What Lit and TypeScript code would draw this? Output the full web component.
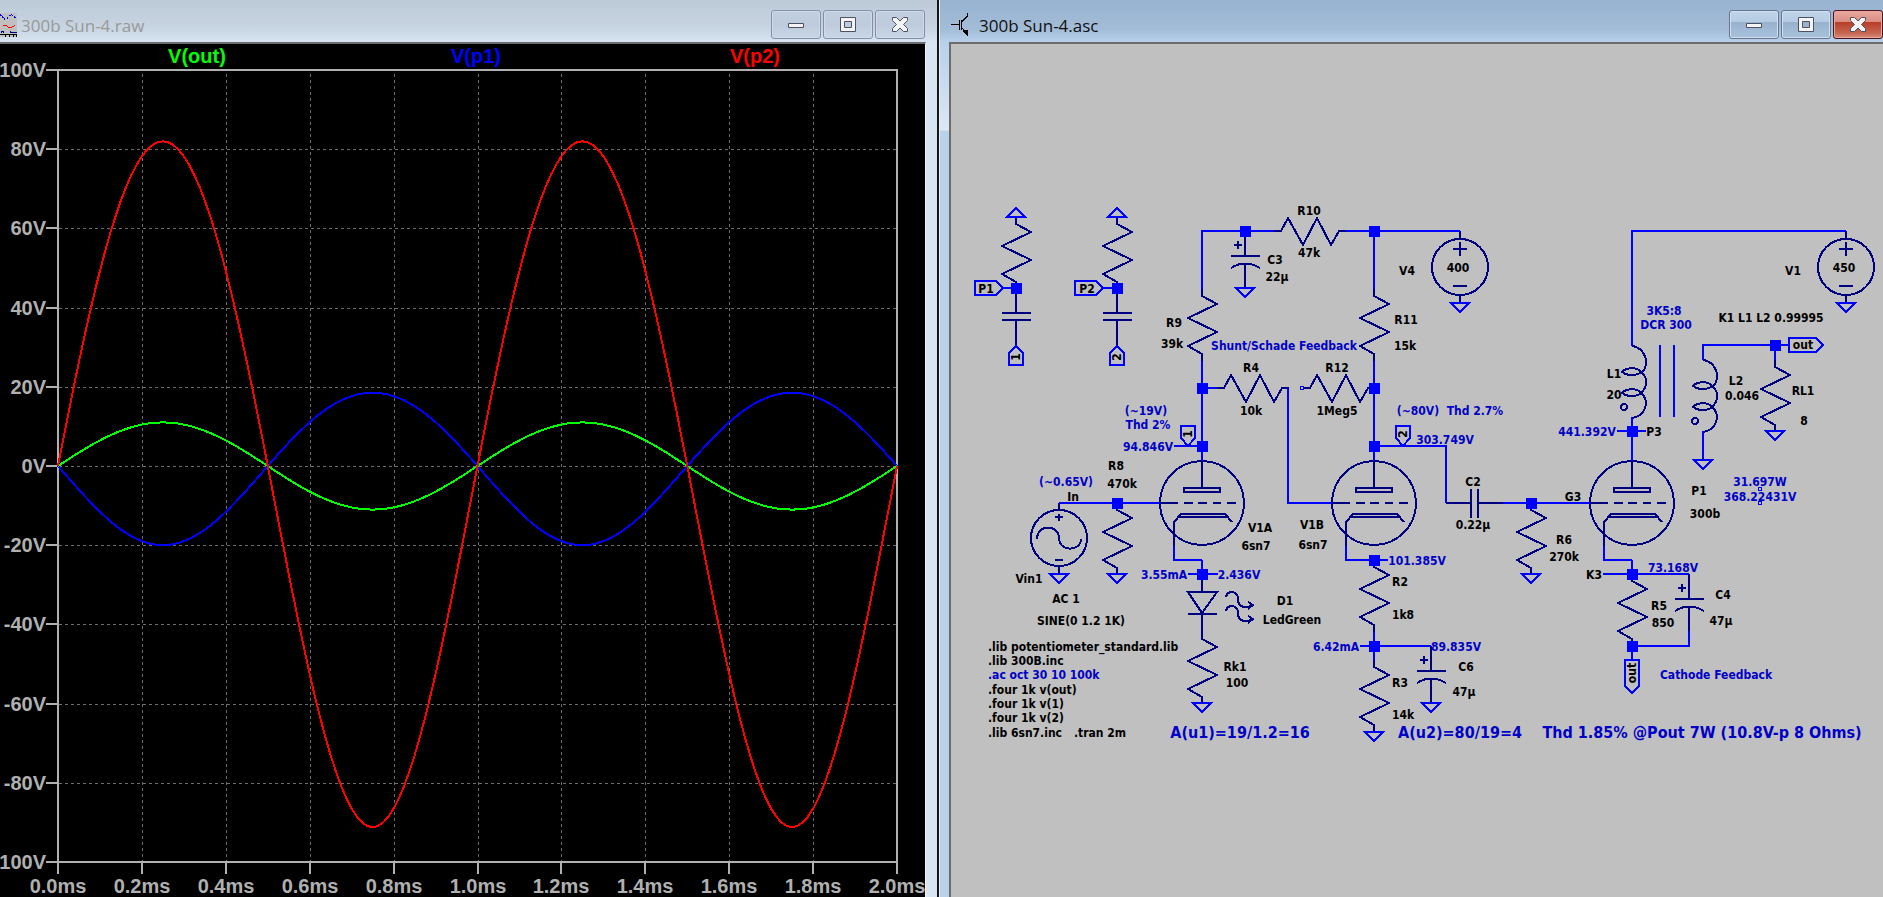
import { LitElement, html, svg, css } from 'lit';
import { customElement, property } from 'lit/decorators.js';
import { classMap } from 'lit/directives/class-map.js';

/* ---------- MDI child window: caption, buttons and sunken client area ---------- */

@customElement('child-window')
class ChildWindow extends LitElement {
  @property() caption = '';
  @property() kind = 'plot';
  @property({ type: Boolean }) active = false;

  static styles = css`
    :host { display: flex; flex-direction: column; min-width: 0; height: 100%; }
    .bar {
      display: flex; align-items: center; flex: none; box-sizing: border-box;
      height: 42px; padding: 10px 12px 3px 0; gap: 4px;
      background: linear-gradient(#bccad8, #c5d1de 50%, #c9d6e3 70%, #d8e4f2);
    }
    .bar.active {
      padding: 10px 0 3px 11px; gap: 11px;
      background: linear-gradient(#97b3d0, #a0bad6 50%, #a3bdd9 70%, #b8d0ea);
    }
    .title {
      flex: 1; min-width: 0; margin: 0; padding-top: 2px; overflow: hidden;
      font: 400 17px/24px "Open Sans", "Noto Sans", sans-serif;
      color: #999; white-space: nowrap;
    }
    .active .title { color: #101010; }
    .icon { flex: none; display: block; }
    .buttons { display: flex; gap: 2px; flex: none; }
    button {
      display: grid; place-items: center; box-sizing: border-box;
      width: 50px; height: 29px; padding: 0; border: 1px solid #8090a9; border-radius: 3px;
      background: linear-gradient(#c2cfde, #bdcbdc 50%, #c9d6e5);
      box-shadow: inset 0 0 0 1px #cfdbe8;
    }
    .active button {
      border-color: #68778e;
      background: linear-gradient(#c0d4e9, #b4cbe3 41%, #98b1cd 42%, #a9c2dc);
      box-shadow: inset 0 0 0 1px #cfe0f1;
    }
    .active button.close {
      border-color: #4a1420;
      background: linear-gradient(#e9a9a0, #da8b80 41%, #b83e28 42%, #c66450 80%, #d88a78);
      box-shadow: inset 0 0 0 1px #e6a69c;
    }
    .glyph { fill: #f4f4f4; fill-rule: evenodd; stroke: #4c5264; stroke-linejoin: round; }
    .frame {
      flex: 1; min-height: 0; display: flex; box-sizing: border-box;
      padding-right: 11px; background: #d7e4f2;
    }
    .frame.active {
      padding: 0 0 0 9px;
      background: linear-gradient(#b8d0ea, #dbe7f4 88px, #b9d1ea 89px, #b9d1ea);
    }
    .client {
      flex: 1; min-width: 0; box-sizing: border-box;
      border-top: 2px solid #6c6c6c; border-right: 1px solid #f4f4f4; background: #000;
    }
    .active .client { border-right: 0; border-left: 2px solid #6c6c6c; background: #c0c0c0; }
  `;

  private icon() {
    return this.kind === 'plot'
      ? html`<svg class="icon" width="17" height="24" viewBox="0 0 17 24" fill="none" shape-rendering="crispEdges" aria-hidden="true">
          <rect width="17" height="24" fill="#c0c0c0"/>
          <path d="M0 1.500L5 6.500M7 5.500L9 3L12 1.800L14 3L16 6" stroke="#00f" stroke-dasharray="2 1"/>
          <path d="M3 12.500H6L9 14.500L12 14L15 12.500" stroke="#f00"/>
          <path d="M1.500 20V18.500H3.500V20M10.500 18V19.500H17" stroke="#000080"/>
          <path d="M0 21.500H17M5.500 22V24M9.500 22V24M13.500 22V24M16.500 22V24" stroke="#000"/>
        </svg>`
      : html`<svg class="icon" width="17" height="24" viewBox="0 0 17 24" fill="none" stroke="#000" shape-rendering="crispEdges" aria-hidden="true">
          <path d="M0 11.500H8M8.500 7V17M10.500 7V17M11 8.500L16.500 3V0M11 15L16 20"/>
          <path d="M12 17.500L16.500 17V23L12 19Z" fill="#000" stroke="none"/>
        </svg>`;
  }

  render() {
    const c = { active: this.active };
    return html`
      <header class="bar ${classMap(c)}">
        ${this.icon()}
        <h1 class="title">${this.caption}</h1>
        <div class="buttons">
          <button aria-label="Minimize">
            <svg width="20" height="17" viewBox="0 0 20 17"><path class="glyph" d="M2.500 7.500H17.500V11.500H2.500Z"/></svg>
          </button>
          <button aria-label="Maximize">
            <svg width="20" height="17" viewBox="0 0 20 17">
              <path class="glyph" d="M2.500 1.500H17.500V15.500H2.500ZM6.500 5.500V11.500H13.500V5.500Z"/>
            </svg>
          </button>
          <button class="close" aria-label="Close">
            <svg width="20" height="17" viewBox="0 0 20 17">
              <path class="glyph" d="M2.500 1.500H6.500L10 5L13.500 1.500H17.500V4.500L13.500 8.500L17.500 12.500V15.500H13.500L10 12L6.500 15.500H2.500V12.500L6.500 8.500L2.500 4.500Z"/>
            </svg>
          </button>
        </div>
      </header>
      <div class="frame ${classMap(c)}"><div class="client"><slot></slot></div></div>
    `;
  }
}

/* ---------- Waveform plot ---------- */

const PLOT = { left: 58, right: 897, top: 70, bottom: 862 };
const px = (ms: number) => PLOT.left + ((PLOT.right - PLOT.left) * ms) / 2;
const py = (v: number) => PLOT.top + ((PLOT.bottom - PLOT.top) * (100 - v)) / 200;

interface Trace { name: string; tone: string; x: number; amp: number; second: number; }

const TRACES: Trace[] = [
  { name: 'V(p1)', tone: 'blue', x: 476, amp: -19.25, second: 0.37 },
  { name: 'V(out)', tone: 'green', x: 197, amp: 11, second: 0 },
  { name: 'V(p2)', tone: 'red', x: 755, amp: 86.6, second: 2.3 },
];

const tracePath = (t: Trace) => {
  const pts: string[] = [];
  for (let i = 0; i <= 160; i++) {
    const ms = i / 80;
    const w = 2 * Math.PI * ms;
    const v = t.amp * Math.sin(w) + t.second * (Math.cos(2 * w) - 1);
    pts.push(`${px(ms).toFixed(1)},${py(v).toFixed(1)}`);
  }
  return pts.join(' ');
};

@customElement('wave-plot')
class WavePlot extends LitElement {
  static styles = css`
    :host { display: block; width: 100%; height: 100%; }
    svg { display: block; width: 100%; height: 100%; }
    text { font: bold 20px "Liberation Sans", Arial, sans-serif; fill: #b0b0b0; text-anchor: middle; }
    .end { text-anchor: end; }
    .axis { fill: none; stroke: #b0b0b0; stroke-width: 2; shape-rendering: crispEdges; }
    .grid { stroke: #6c6c6c; stroke-width: 1; stroke-dasharray: 3 3; shape-rendering: crispEdges; }
    .green { fill: #00ff00; stroke: #00ff00; }
    .blue { fill: #0000ff; stroke: #0000ff; }
    .red { fill: #ff0000; stroke: #ff0000; }
    text { stroke: none; }
    text.green, text.blue, text.red { stroke: none; }
    .trace { fill: none; stroke-width: 2; shape-rendering: crispEdges; }
  `;

  render() {
    const steps = Array.from({ length: 11 }, (_, i) => i);
    return html`<svg viewBox="0 44 925 853" role="img" aria-label="Transient waveforms">
      ${steps.slice(1, 10).map(i => {
        const x = Math.round(px(i * 0.2)) + 0.5;
        const y = Math.round(py(100 - i * 20)) + 0.5;
        return svg`<line class="grid" x1=${x} y1="74" x2=${x} y2="861"/><line class="grid" x1="59" y1=${y} x2="896" y2=${y}/>`;
      })}
      <rect class="axis" x="58" y="70" width="839" height="792"/>
      ${steps.map(i => {
        const x = Math.round(px(i * 0.2));
        const y = Math.round(py(100 - i * 20));
        return svg`<path class="axis" d="M${x} 862V874M46 ${y}H58"/>
          <text x=${x} y="893">${(i * 0.2).toFixed(1)}ms</text>
          <text class="end" x="46" y=${y + 7}>${100 - i * 20}V</text>`;
      })}
      ${TRACES.map(t => svg`<polyline class="${t.tone} trace" points=${tracePath(t)}/>
        <text class=${t.tone} x=${t.x} y="63">${t.name}</text>`)}
    </svg>`;
  }
}

/* ---------- Schematic symbols ---------- */

type P = [number, number];
const at = ([x, y]: P) => `translate(${x} ${y})`;

const resistor = (p: P) => svg`<path class="sym" transform=${at(p)} d="M0 0V7L15 15L-14 29L15 43L-14 57L0 65V72"/>`;
const resistorH = (p: P) => svg`<path class="sym" transform=${at(p)} d="M0 0H7L14 -13L29 14L43 -13L57 14L65 0H72"/>`;
const ground = (p: P) => svg`<path class="wire" transform=${at(p)} d="M-9 0H9L0 9Z"/>`;
const node = ([x, y]: P) => svg`<rect class="node" x=${x - 5} y=${y - 5} width="11" height="11"/>`;
const pin = ([x, y]: P) => svg`<rect class="pin" x=${x - 1.5} y=${y - 1.5} width="3" height="3"/>`;
const cap = (p: P) => svg`<path class="sym" transform=${at(p)} d="M0 0V25M-14 25H15M-14 32H15M0 32V57"/>`;
const polarCap = (p: P) => svg`<path class="sym" transform=${at(p)} d="M0 0V25M-14 25H15M-14 37Q0 28 15 37M0 32V57M-11 14H-3M-7 10V18"/>`;
const coil = (p: P) => svg`<g transform=${at(p)}>
  <path class="sym" d="M0 0C9 1 14 9 14 16C14 21 12 25 9 26C5 21 -5 21 -10 26C-5 30 5 30 9 26C16 32 16 40 9 47C5 42 -5 42 -10 47C-5 51 5 51 9 47C18 55 14 70 0 72"/>
  <circle class="sym" cx="-8" cy="61" r="3"/></g>`;
const triode = (p: P) => svg`<g transform=${at(p)}>
  <circle class="sym" r="42"/>
  <path class="sym" d="M0 -42V-15M-18 -15H18V-11H-18ZM-42 0H-24M-18 0H-9M-4 0H5M11 0H19M25 0H34M-28 43V19L-21 11H23L30 19M-24 14H25"/>
  <path class="wire" d="M-28 43V57H0"/></g>`;
const source = (p: P) => svg`<g transform=${at(p)}>
  <circle class="sym" r="28"/><path class="sym" d="M0 -36V-28M0 28V36M0 -25V-11M-7 -18H7M-7 19H7"/></g>`;
const acSource = (p: P) => svg`<g transform=${at(p)}>
  <circle class="sym" r="28"/>
  <path class="sym" d="M0 -35V-28M0 28V36M0 -24V-17M-4 -21H4M-4 22H4M-22 1C-22 -14 0 -14 0 0C0 14 22 14 22 1"/></g>`;

const WIRES = [
  'M1202 289V231H1274M1346 231H1460M1374 231V289M1202 361V461M1374 361V461',
  'M1202 388H1217M1288 388V503H1332M1174 446H1202M1374 446H1446V503',
  'M1059 503H1160M1188 574H1218M1202 560V574M1374 560H1388M1374 632V660M1360 646H1431',
  'M1503 503H1590M1632 346V231H1846M1632 417V461M1617 431H1646M1660 345V417M1674 345V417',
  'M1703 360V345H1789M1775 345V360M1703 431V459M1632 560V574M1603 574H1689M1689 631V646H1632M1632 646V660',
  'M1003 288H1016M1104 288H1117',
  /* port flags */
  'M975 281H996L1003 288L996 295H975ZM1075 281H1096L1103 288L1096 295H1075Z',
  'M1016 346L1023 353V365H1009V353ZM1117 346L1124 353V365H1110V353Z',
  'M1181 426H1195V438L1188 446L1181 438ZM1396 426H1410V438L1403 446L1396 438Z',
  'M1789 338H1816L1823 345L1816 352H1789ZM1625 660H1639V686L1632 693L1625 686Z',
  'M1007 217H1025L1016 208ZM1108 217H1126L1117 208Z',
].join('');

const NODES: P[] = [
  [1016, 288], [1117, 288], [1245, 231], [1374, 231], [1202, 388], [1374, 388], [1202, 446], [1374, 446],
  [1117, 503], [1202, 574], [1374, 560], [1374, 646], [1531, 503], [1632, 431], [1775, 345], [1632, 574], [1632, 646],
];
const RES: P[] = [
  [1016, 217], [1117, 217], [1202, 289], [1374, 289], [1117, 503], [1202, 632], [1374, 560],
  [1374, 660], [1531, 503], [1775, 360], [1632, 574],
];
const RES_H: P[] = [[1274, 231], [1217, 388], [1303, 388]];
const GROUNDS: P[] = [
  [1245, 288], [1460, 303], [1846, 303], [1059, 574], [1117, 574], [1202, 703], [1374, 732],
  [1431, 703], [1531, 574], [1703, 460], [1775, 431],
];

type Label = [string, number, number];
const PARTS: Label[] = [
  ['P1', 986, 293], ['P2', 1087, 293], ['R9', 1174, 327], ['39k', 1172, 348], ['C3', 1275, 264], ['22µ', 1277, 281],
  ['R10', 1309, 215], ['47k', 1309, 257], ['V4', 1407, 275], ['400', 1458, 272], ['R11', 1406, 324], ['15k', 1405, 350],
  ['R4', 1251, 372], ['10k', 1251, 415], ['R12', 1337, 372], ['1Meg5', 1337, 415], ['V1', 1793, 275], ['450', 1844, 272],
  ['K1 L1 L2 0.99995', 1771, 322], ['out', 1803, 349], ['L1', 1614, 378], ['20', 1614, 399], ['L2', 1736, 385],
  ['0.046', 1742, 400], ['RL1', 1803, 395], ['8', 1804, 425], ['P3', 1654, 436], ['R8', 1116, 470], ['470k', 1122, 488],
  ['In', 1073, 501], ['V1A', 1260, 532], ['6sn7', 1256, 550], ['Vin1', 1029, 583], ['AC 1', 1066, 603],
  ['SINE(0 1.2 1K)', 1081, 625], ['D1', 1285, 605], ['LedGreen', 1292, 624], ['Rk1', 1235, 671], ['100', 1237, 687],
  ['V1B', 1312, 529], ['6sn7', 1313, 549], ['C2', 1473, 486], ['0.22µ', 1473, 529], ['R6', 1564, 544], ['270k', 1564, 561],
  ['R2', 1400, 586], ['1k8', 1403, 619], ['C6', 1466, 671], ['47µ', 1464, 696], ['R3', 1400, 687], ['14k', 1403, 719],
  ['G3', 1573, 501], ['P1', 1699, 495], ['300b', 1705, 518], ['K3', 1594, 579], ['R5', 1659, 610], ['850', 1663, 627],
  ['C4', 1723, 599], ['47µ', 1721, 625],
];
const COMMENTS: Label[] = [
  ['Shunt/Schade Feedback', 1284, 350], ['(~80V)\u00a0 Thd 2.7%', 1450, 415], ['303.749V', 1445, 444], ['3K5:8', 1664, 315],
  ['DCR 300', 1666, 329], ['441.392V', 1587, 436], ['(~19V)', 1146, 415], ['Thd 2%', 1148, 429], ['94.846V', 1148, 451],
  ['(~0.65V)', 1066, 486], ['3.55mA', 1164, 579], ['2.436V', 1239, 579], ['101.385V', 1417, 565], ['6.42mA', 1336, 651],
  ['89.835V', 1456, 651], ['31.697W', 1760, 486], ['368.22431V', 1760, 501], ['73.168V', 1673, 572], ['Cathode Feedback', 1716, 679],
];
const NOTES: Label[] = [
  ['A(u1)=19/1.2=16', 1240, 738], ['A(u2)=80/19=4', 1460, 738], ['Thd 1.85% @Pout 7W (10.8V-p 8 Ohms)', 1702, 738],
];
const DIRECTIVES: Label[] = [
  ['.lib potentiometer_standard.lib', 988, 651], ['.lib 300B.inc', 988, 665], ['.four 1k v(out)', 988, 694],
  ['.four 1k v(1)', 988, 708], ['.four 1k v(2)', 988, 722], ['.lib 6sn7.inc', 988, 737], ['.tran 2m', 1074, 737],
];
const UPRIGHT: Label[] = [['1', 1020, 357], ['2', 1121, 357], ['1', 1192, 434], ['2', 1407, 434], ['out', 1636, 673]];

@customElement('schematic-view')
class SchematicView extends LitElement {
  static styles = css`
    :host { display: block; width: 100%; height: 100%; }
    svg { display: block; width: 100%; height: 100%; }
    .wire, .sym { fill: none; stroke: #0000ff; stroke-width: 2; shape-rendering: crispEdges; }
    .sym { stroke: #000080; }
    .node { fill: #0000ff; shape-rendering: crispEdges; }
    .pin { fill: none; stroke: #0000ff; stroke-width: 1; shape-rendering: crispEdges; }
    text { font: bold 12px "DejaVu Sans Condensed", "DejaVu Sans", sans-serif; fill: #000; text-anchor: middle; }
    .comment, .note { fill: #0000c8; }
    .note { font-size: 16px; }
    .start { text-anchor: start; }
  `;

  render() {
    const labels = (list: Label[], cls: string) =>
      list.map(([s, x, y]) => svg`<text class=${cls} x=${x} y=${y}>${s}</text>`);
    return html`<svg viewBox="951 44 932 853" role="img" aria-label="300B amplifier schematic">
      ${RES.map(resistor)}${RES_H.map(resistorH)}
      ${cap([1016, 288])}${cap([1117, 288])}
      ${polarCap([1245, 231])}${polarCap([1431, 646])}${polarCap([1689, 574])}
      <path class="sym" d="M1446 503H1471M1471 489V518M1478 489V518M1478 503H1503"/>
      ${coil([1632, 346])}${coil([1703, 360])}
      ${triode([1202, 503])}${triode([1374, 503])}${triode([1632, 503])}
      ${source([1460, 267])}${source([1846, 267])}${acSource([1059, 538])}
      <path class="sym" d="M1202 574V592M1188 592H1217L1202 613ZM1188 614H1217M1202 614V632"/>
      ${[0, 14].map(dy => svg`<path class="sym" transform=${at([0, dy])} d="M1226 597Q1227 592 1232 592Q1238 593 1238 599Q1238 606 1244 607Q1247 608 1252 605M1248 602L1253 605L1248 609"/>`)}
      <path class="wire" d=${WIRES}/>
      ${GROUNDS.map(ground)}${NODES.map(node)}
      ${pin([1302, 388])}${pin([1760, 489])}${pin([1760, 503])}
      ${labels(PARTS, '')}${labels(COMMENTS, 'comment')}${labels(NOTES, 'note')}${labels(DIRECTIVES, 'start')}
      <text class="comment start" x="988" y="679">.ac oct 30 10 100k</text>
      ${UPRIGHT.map(([s, x, y]) => svg`<text transform="translate(${x} ${y}) rotate(-90)">${s}</text>`)}
    </svg>`;
  }
}

@customElement('app-root')
class AppRoot extends LitElement {
  static styles = css`
    :host {
      display: grid; grid-template: minmax(0, 1fr) / minmax(0, 937fr) 3px minmax(0, 943fr);
      height: 100vh; overflow: hidden;
    }
    .gap { box-sizing: border-box; background: #151515; border-right: 1px solid #e8f0f8; }
  `;
  render() {
    return html`
      <child-window caption="300b Sun-4.raw" kind="plot"><wave-plot></wave-plot></child-window>
      <div class="gap"></div>
      <child-window caption="300b Sun-4.asc" kind="schematic" active><schematic-view></schematic-view></child-window>
    `;
  }
}
